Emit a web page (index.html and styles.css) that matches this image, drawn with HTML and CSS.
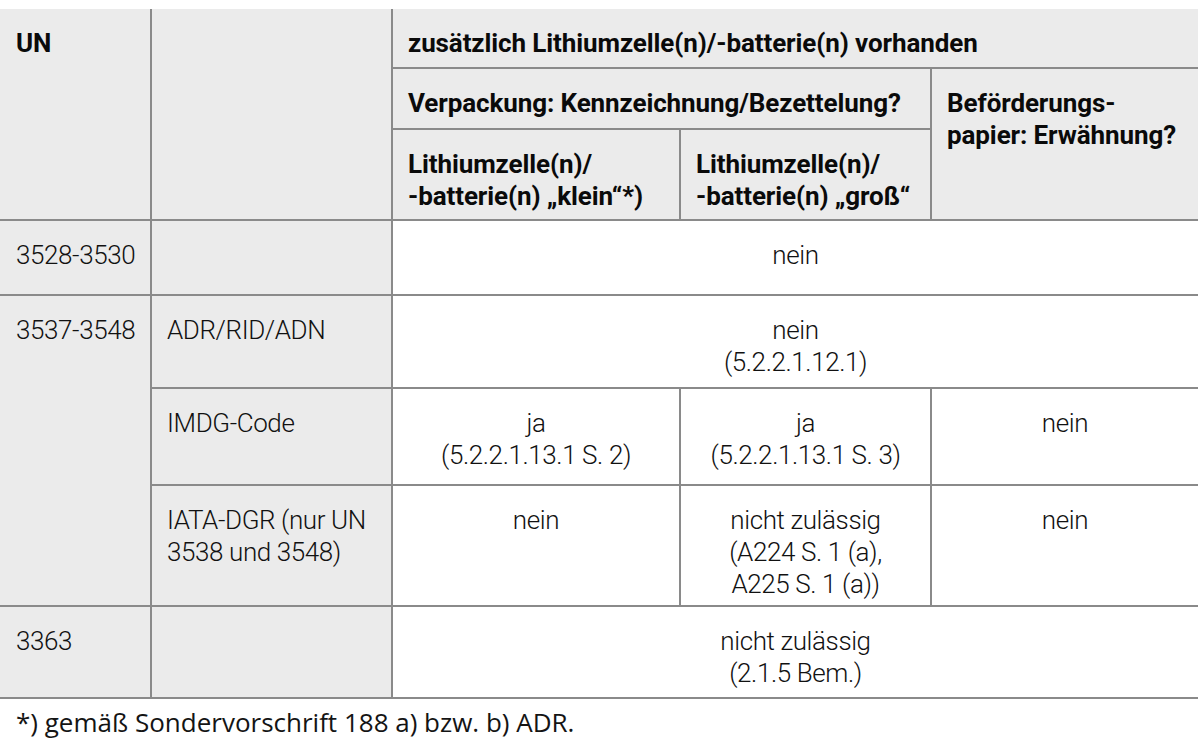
FILE: index.html
```html
<!DOCTYPE html>
<html lang="de">
<head>
<meta charset="utf-8">
<title>Lithiumzellen</title>
<link rel="stylesheet" href="styles.css">
</head>
<body>
<table class="grid">
  <colgroup>
    <col class="c1"><col class="c2"><col class="c3"><col class="c4"><col class="c5">
  </colgroup>
  <tr class="h1">
    <td class="hd first top" rowspan="3">UN</td>
    <td class="hd top" rowspan="3"></td>
    <td class="hd top last" colspan="3">zusätzlich Lithiumzelle(n)/-batterie(n) vorhanden</td>
  </tr>
  <tr class="h2">
    <td class="hd" colspan="2">Verpackung: Kennzeichnung/Bezettelung?</td>
    <td class="hd last" rowspan="2">Beförderungs-<br>papier: Erwähnung?</td>
  </tr>
  <tr class="h3">
    <td class="hd">Lithiumzelle(n)/<br>-batterie(n) „klein“*)</td>
    <td class="hd">Lithiumzelle(n)/<br>-batterie(n) „groß“</td>
  </tr>
  <tr class="b1">
    <td class="key first">3528-3530</td>
    <td class="key"></td>
    <td class="val last" colspan="3">nein</td>
  </tr>
  <tr class="b2">
    <td class="key first" rowspan="3">3537-3548</td>
    <td class="key">ADR/RID/ADN</td>
    <td class="val last" colspan="3">nein<br>(5.2.2.1.12.1)</td>
  </tr>
  <tr class="b3">
    <td class="key">IMDG-Code</td>
    <td class="val">ja<br>(5.2.2.1.13.1 S. 2)</td>
    <td class="val">ja<br>(5.2.2.1.13.1 S. 3)</td>
    <td class="val last">nein</td>
  </tr>
  <tr class="b4">
    <td class="key">IATA-DGR (nur UN<br>3538 und 3548)</td>
    <td class="val">nein</td>
    <td class="val">nicht zulässig<br>(A224 S. 1 (a),<br>A225 S. 1 (a))</td>
    <td class="val last">nein</td>
  </tr>
  <tr class="b5">
    <td class="key first">3363</td>
    <td class="key"></td>
    <td class="val last" colspan="3">nicht zulässig<br>(2.1.5 Bem.)</td>
  </tr>
</table>
<p class="note">*) gemäß Sondervorschrift 188 a) bzw. b) ADR.</p>
</body>
</html>
```
FILE: styles.css
```css
html, body {
  margin: 0;
  padding: 0;
  background: #ffffff;
}

.grid {
  margin-top: 9px;
  width: 1198px;
  border-collapse: collapse;
  table-layout: fixed;
  font-family: Roboto, "Liberation Sans", sans-serif;
  font-size: 26px;
  line-height: 32px;
  color: #111111;
}

.c1 { width: 151px; }
.c2 { width: 241px; }
.c3 { width: 288px; }
.c4 { width: 251px; }
.c5 { width: 267px; }

.grid td {
  border: 2px solid #8a8a8a;
  padding: 18px 6px 0 15px;
  vertical-align: top;
  text-align: left;
  white-space: nowrap;
}

.grid td.first { border-left: 0; padding-left: 16px; padding-right: 0; }
.grid td.last { border-right: 0; }
.grid td.top { border-top: 0; }

.hd {
  background: #ebebeb;
  font-weight: 700;
  letter-spacing: -0.1px;
  color: #0a0a0a;
}

.key {
  background: #ebebeb;
  font-weight: 350;
  letter-spacing: -0.4px;
}

.val {
  background: #ffffff;
  font-weight: 350;
  letter-spacing: -0.4px;
}

.grid td.val {
  text-align: center;
  padding-left: 6px;
}

.h1 { height: 59px; }
.h2 { height: 61px; }
.h3 { height: 91px; }
.b1 { height: 75px; }
.b2 { height: 93px; }
.b3 { height: 97px; }
.b4 { height: 121px; }
.b5 { height: 92px; }

.note {
  margin: 7px 0 0 0;
  padding-left: 16px;
  font-family: "Open Sans", "Noto Sans", sans-serif;
  font-size: 26px;
  line-height: 32px;
  color: #141414;
}
```
